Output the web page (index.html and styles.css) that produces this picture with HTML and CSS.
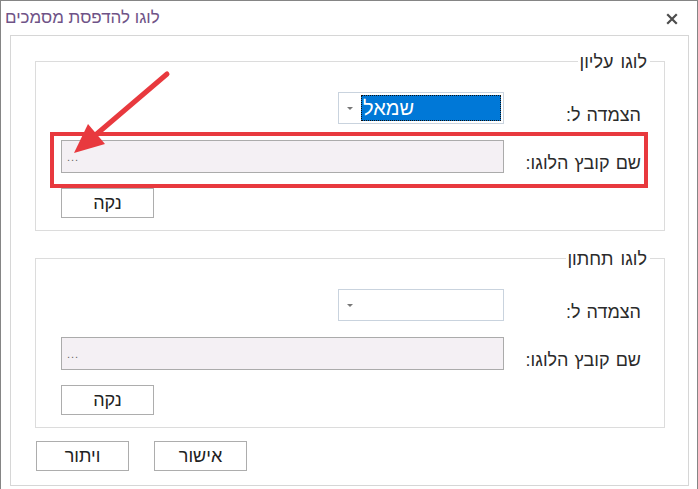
FILE: index.html
```html
<!DOCTYPE html>
<html lang="he">
<head>
<meta charset="utf-8">
<link rel="stylesheet" href="styles.css">
</head>
<body>
<div class="window">
  <div class="titlebar">
    <span class="title">לוגו להדפסת מסמכים</span>
    <svg class="close" width="12" height="12" viewBox="0 0 12 12"><path d="M2 2 L10 10 M10 2 L2 10" stroke="#4d4d4d" stroke-width="2.2" stroke-linecap="square"/></svg>
  </div>
  <div class="content" dir="rtl">
    <fieldset class="group">
      <legend class="legend">לוגו עליון</legend>
      <div class="grid">
        <label class="label">הצמדה ל:</label>
        <div class="combo">
          <span class="drop"><span class="tri"></span></span>
          <span class="value selected">שמאל</span>
        </div>
        <label class="label">שם קובץ הלוגו:</label>
        <div class="field"><span class="dots">...</span></div>
        <span></span>
        <button class="btn">נקה</button>
      </div>
    </fieldset>
    <fieldset class="group group2">
      <legend class="legend">לוגו תחתון</legend>
      <div class="grid">
        <label class="label">הצמדה ל:</label>
        <div class="combo">
          <span class="drop"><span class="tri"></span></span>
          <span class="value"></span>
        </div>
        <label class="label">שם קובץ הלוגו:</label>
        <div class="field"><span class="dots">...</span></div>
        <span></span>
        <button class="btn">נקה</button>
      </div>
    </fieldset>
    <div class="actions">
      <button class="btn">אישור</button>
      <button class="btn">ויתור</button>
    </div>
  </div>
  <div class="highlight"></div>
  <svg class="arrow" width="698" height="489" viewBox="0 0 698 489">
    <line x1="167" y1="74" x2="92" y2="138" stroke="#e8393e" stroke-width="5" stroke-linecap="round"/>
    <polygon points="74,153 88,124 105,144" fill="#e8393e"/>
  </svg>
</div>
</body>
</html>
```
FILE: styles.css
```css
* { box-sizing: border-box; }
html, body { margin: 0; padding: 0; background: #fff; }
body {
  width: 698px;
  height: 489px;
  overflow: hidden;
  font-family: "Liberation Sans", "DejaVu Sans", sans-serif;
  color: #2b2b2b;
}
.window {
  position: relative;
  width: 698px;
  height: 489px;
  border: 1px solid #858585;
  border-bottom: none;
  background: #fff;
}
.titlebar {
  height: 34px;
  display: flex;
  align-items: center;
  justify-content: space-between;
  padding: 0 19px 0 4px;
}
.title {
  font-size: 17px;
  color: #6f5387;
  padding-bottom: 1px;
}
.close { display: block; margin-top: 1px; }
.content {
  margin: 0 8px 0 9px;
  height: 451px;
  border: 1px solid #d6d6d6;
  padding: 15px 23px 0 24px;
}
.group {
  margin: 0;
  padding: 21px 0 11px 23px;
  border: 1px solid #dcdcdc;
  min-width: 0;
}
.group2 { margin-top: 17px; }
.legend {
  font-size: 18px;
  line-height: 20px;
  height: 20px;
  padding: 0 3px 0 1px;
  margin-right: 14px;
  color: #2b2b2b;
  word-spacing: 2px;
  position: relative;
  top: 1px;
}
.grid {
  display: grid;
  grid-template-columns: 160px 443px;
  grid-template-rows: 32px 33px 30px;
  row-gap: 16px;
}
.grid .btn { justify-self: end; margin-top: -1px; }
.label {
  font-size: 18px;
  padding-right: 23px;
  display: flex;
  align-items: center;
  padding-top: 14px;
  word-spacing: 1px;
}
.combo {
  width: 166px;
  height: 32px;
  border: 1px solid #c9d3de;
  background: #fff;
  display: flex;
  direction: ltr;
  justify-self: start;
}
.drop {
  width: 22px;
  display: flex;
  align-items: center;
  justify-content: center;
}
.tri {
  width: 0;
  height: 0;
  border-left: 3px solid transparent;
  border-right: 3px solid transparent;
  border-top: 3px solid #777;
}
.value {
  flex: 1;
  margin: 2px 2px 2px 0;
  font-size: 20px;
  line-height: 26px;
  padding-left: 2px;
  color: #fff;
  text-align: left;
}
.selected {
  background: #0078d7;
  outline: 1px dotted #111;
  outline-offset: -1px;
}
.field {
  width: 443px;
  height: 33px;
  border: 1px solid #ababab;
  background: #f4f0f4;
  direction: ltr;
  padding: 6px 0 0 5px;
}
.dots {
  font-size: 11px;
  color: #666;
  letter-spacing: 1px;
}
.btn {
  width: 93px;
  height: 30px;
  border: 1px solid #adadad;
  background: #fff;
  font-family: "Liberation Sans", "DejaVu Sans", sans-serif;
  font-size: 18px;
  color: #222;
  padding: 0;
}
.actions {
  margin-top: 13px;
  display: flex;
  justify-content: flex-end;
  gap: 25px;
  padding-left: 1px;
}
.highlight {
  position: absolute;
  left: 49px;
  top: 131px;
  width: 598px;
  height: 56px;
  border: 4px solid #e8393e;
}
.arrow {
  position: absolute;
  left: -1px;
  top: -1px;
  pointer-events: none;
}
```
